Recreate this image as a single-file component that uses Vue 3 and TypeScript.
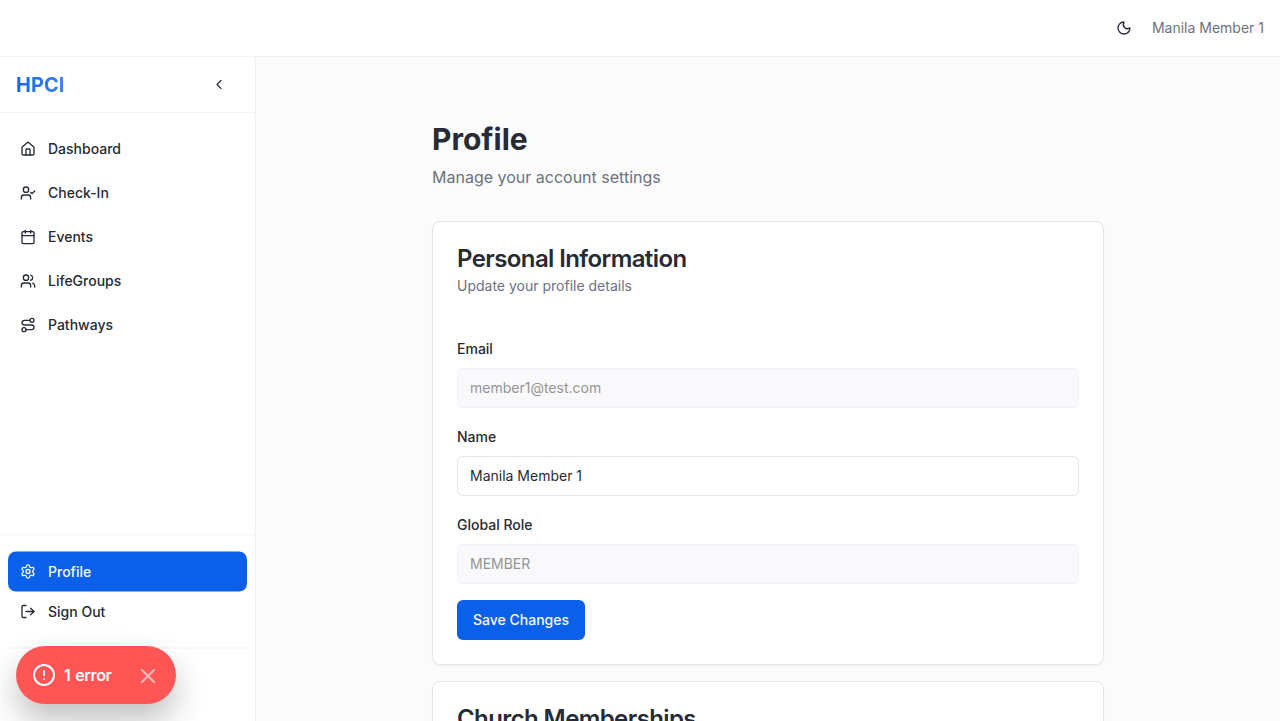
<script setup lang="ts">
import { ref } from 'vue'

interface NavItem {
  label: string
  paths: string[]
  circles?: [number, number, number][]
}

const navItems: NavItem[] = [
  {
    label: 'Dashboard',
    paths: [
      'M15 21v-8a1 1 0 0 0-1-1h-4a1 1 0 0 0-1 1v8',
      'M3 10a2 2 0 0 1 .709-1.528l7-5.999a2 2 0 0 1 2.582 0l7 5.999A2 2 0 0 1 21 10v9a2 2 0 0 1-2 2H5a2 2 0 0 1-2-2z',
    ],
  },
  {
    label: 'Check-In',
    paths: ['m16 11 2 2 4-4', 'M16 21v-2a4 4 0 0 0-4-4H6a4 4 0 0 0-4 4v2'],
    circles: [[9, 7, 4]],
  },
  {
    label: 'Events',
    paths: ['M8 2v4', 'M16 2v4', 'M5 4h14a2 2 0 0 1 2 2v14a2 2 0 0 1-2 2H5a2 2 0 0 1-2-2V6a2 2 0 0 1 2-2z', 'M3 10h18'],
  },
  {
    label: 'LifeGroups',
    paths: [
      'M16 21v-2a4 4 0 0 0-4-4H6a4 4 0 0 0-4 4v2',
      'M16 3.128a4 4 0 0 1 0 7.744',
      'M22 21v-2a4 4 0 0 0-3-3.87',
    ],
    circles: [[9, 7, 4]],
  },
  {
    label: 'Pathways',
    paths: ['M9 19h8.5a3.5 3.5 0 0 0 0-7h-11a3.5 3.5 0 0 1 0-7H15'],
    circles: [[6, 19, 3], [18, 5, 3]],
  },
]

const email = ref('member1@test.com')
const name = ref('Manila Member 1')
const role = ref('MEMBER')
</script>

<template>
  <div class="app">
    <header class="topbar">
      <svg class="icon" viewBox="0 0 24 24">
        <path d="M20.985 12.486a9 9 0 1 1-9.473-9.472c.405-.022.617.46.402.803a6 6 0 0 0 8.268 8.268c.344-.215.825-.004.803.401" />
      </svg>
      <span class="user">Manila Member 1</span>
    </header>

    <div class="body">
      <aside class="sidebar">
        <div class="brand-row">
          <span class="brand">HPCI</span>
          <svg class="icon chevron" viewBox="0 0 24 24"><path d="m15 18-6-6 6-6" /></svg>
        </div>
        <nav class="nav">
          <a v-for="item in navItems" :key="item.label" class="nav-item">
            <svg class="icon" viewBox="0 0 24 24">
              <path v-for="d in item.paths" :key="d" :d="d" />
              <circle v-for="c in item.circles" :key="c.join()" :cx="c[0]" :cy="c[1]" :r="c[2]" />
            </svg>
            <span>{{ item.label }}</span>
          </a>
        </nav>
        <div class="account">
          <a class="nav-item active">
            <svg class="icon" viewBox="0 0 24 24">
              <path d="M9.671 4.136a2.34 2.34 0 0 1 4.659 0 2.34 2.34 0 0 0 3.319 1.915 2.34 2.34 0 0 1 2.33 4.033 2.34 2.34 0 0 0 0 3.831 2.34 2.34 0 0 1-2.33 4.033 2.34 2.34 0 0 0-3.319 1.915 2.34 2.34 0 0 1-4.659 0 2.34 2.34 0 0 0-3.32-1.915 2.34 2.34 0 0 1-2.33-4.033 2.34 2.34 0 0 0 0-3.831A2.34 2.34 0 0 1 6.35 6.051a2.34 2.34 0 0 0 3.319-1.915" />
              <circle cx="12" cy="12" r="3" />
            </svg>
            <span>Profile</span>
          </a>
          <a class="nav-item">
            <svg class="icon" viewBox="0 0 24 24">
              <path d="m16 17 5-5-5-5" />
              <path d="M21 12H9" />
              <path d="M9 21H5a2 2 0 0 1-2-2V5a2 2 0 0 1 2-2h4" />
            </svg>
            <span>Sign Out</span>
          </a>
          <div class="account-footer"></div>
        </div>
      </aside>

      <main class="main">
        <div class="content">
          <div class="heading">
            <h1>Profile</h1>
            <p>Manage your account settings</p>
          </div>
          <section class="card">
            <h2>Personal Information</h2>
            <p class="card-desc">Update your profile details</p>
            <form class="form" @submit.prevent>
              <label class="field">
                <span>Email</span>
                <input v-model="email" type="text" disabled />
              </label>
              <label class="field">
                <span>Name</span>
                <input v-model="name" type="text" />
              </label>
              <label class="field">
                <span>Global Role</span>
                <input v-model="role" type="text" disabled />
              </label>
              <button class="save" type="submit">Save Changes</button>
            </form>
          </section>
          <section class="card">
            <h2>Church Memberships</h2>
          </section>
        </div>
      </main>
    </div>

    <div class="toast">
      <svg class="toast-icon" viewBox="0 0 24 24">
        <circle cx="12" cy="12" r="10" />
        <path d="M12 8v4" />
        <path d="M12 16h.01" />
      </svg>
      <span>1 error</span>
      <svg class="toast-close" viewBox="0 0 24 24"><path d="M18 6 6 18M6 6l12 12" /></svg>
    </div>
  </div>
</template>

<style>
body {
  margin: 0;
  overflow: hidden;
}
</style>

<style scoped>
* {
  box-sizing: border-box;
}
.app {
  height: 721px;
  display: flex;
  flex-direction: column;
  overflow: hidden;
  background: #fbfbfb;
  color: #262b35;
  font-family: Inter, sans-serif;
  font-size: 14px;
  line-height: 20px;
}
.icon {
  width: 16px;
  height: 16px;
  flex: none;
  fill: none;
  stroke: currentColor;
  stroke-width: 2;
  stroke-linecap: round;
  stroke-linejoin: round;
}
.topbar {
  height: 57px;
  flex: none;
  display: flex;
  align-items: center;
  justify-content: flex-end;
  gap: 20px;
  padding: 0 16px;
  background: #fff;
  border-bottom: 1px solid #f0f2f7;
}
.user {
  color: #6b7280;
}
.body {
  flex: 1;
  min-height: 0;
  display: flex;
}
.sidebar {
  width: 256px;
  flex: none;
  display: flex;
  flex-direction: column;
  background: #fff;
  border-right: 1px solid #f0f2f7;
}
.brand-row {
  height: 56px;
  flex: none;
  display: flex;
  align-items: center;
  justify-content: space-between;
  padding: 0 28px 0 16px;
  border-bottom: 1px solid #f0f2f7;
}
.brand {
  font-size: 20px;
  line-height: 28px;
  font-weight: 700;
  color: transparent;
  background: linear-gradient(90deg, #1565f0, #3b82f6);
  background-clip: text;
}
.chevron {
  stroke-width: 1.75;
  transform: translateY(-0.5px);
}
.nav {
  flex: 1;
  display: flex;
  flex-direction: column;
  gap: 4px;
  padding: 16px 8px;
}
.nav-item {
  height: 40px;
  display: flex;
  align-items: center;
  gap: 12px;
  padding: 0 12px;
  border-radius: 8px;
  font-weight: 500;
}
.active {
  background: #0b60ea;
  color: #f8fafc;
}
.account {
  height: 186px;
  flex: none;
  padding: 16px 8px 0;
  border-top: 1px solid #f0f2f7;
  transform: translateY(-0.5px);
}
.account-footer {
  margin-top: 16px;
  border-top: 1px solid #f0f2f7;
}
.main {
  flex: 1;
  padding-top: 64px;
}
.content {
  width: 672px;
  margin: 0 auto;
}
.heading {
  margin-bottom: 32px;
}
h1,
h2,
p {
  margin: 0;
}
h1 {
  font-size: 30px;
  line-height: 36px;
  font-weight: 700;
}
.heading p {
  margin-top: 8px;
  font-size: 16px;
  line-height: 24px;
  color: #6b7280;
}
.card {
  margin-bottom: 16px;
  padding: 24px;
  background: #fff;
  border: 1px solid #e2e6f0;
  border-radius: 8px;
  box-shadow: 0 1px 2px rgba(0, 0, 0, 0.05);
}
h2 {
  padding-top: 1px;
  font-size: 24px;
  line-height: 24px;
  font-weight: 600;
  letter-spacing: -0.025em;
}
.card-desc {
  margin-top: 5px;
  color: #6b7280;
}
.form {
  display: flex;
  flex-direction: column;
  align-items: flex-start;
  gap: 16px;
  margin-top: 40px;
}
.field {
  width: 100%;
  display: flex;
  flex-direction: column;
  gap: 8px;
  font-weight: 500;
}
.field span {
  padding-top: 1px;
  line-height: 23px;
}
.field input {
  height: 40px;
  padding: 0 12px 2px;
  border: 1px solid #e2e6f0;
  border-radius: 6px;
  background: #fff;
  font: 400 14px/20px Inter, sans-serif;
  color: #262b35;
}
.field input:disabled {
  background: #f9f9fb;
  border-color: #f0f2f7;
  color: #959595;
}
.save {
  height: 40px;
  padding: 0 16px;
  border: 0;
  border-radius: 6px;
  background: #0b60ea;
  color: #f8fafc;
  font: 500 14px/20px Inter, sans-serif;
}
.toast {
  position: absolute;
  left: 16px;
  top: 646px;
  width: 160px;
  height: 58px;
  display: flex;
  align-items: center;
  gap: 8px;
  padding: 0 16px;
  border-radius: 29px;
  background: #ff5555;
  color: #fff;
  font-size: 16px;
  line-height: 24px;
  font-weight: 600;
  letter-spacing: -0.02em;
  word-spacing: 1px;
  box-shadow: 0 16px 32px rgba(0, 0, 0, 0.25);
}
.toast svg {
  width: 24px;
  height: 24px;
  flex: none;
  fill: none;
  stroke: currentColor;
  stroke-width: 2;
  stroke-linecap: round;
  stroke-linejoin: round;
}
.toast .toast-close {
  margin: 2px 0 0 auto;
  opacity: 0.6;
}
</style>
